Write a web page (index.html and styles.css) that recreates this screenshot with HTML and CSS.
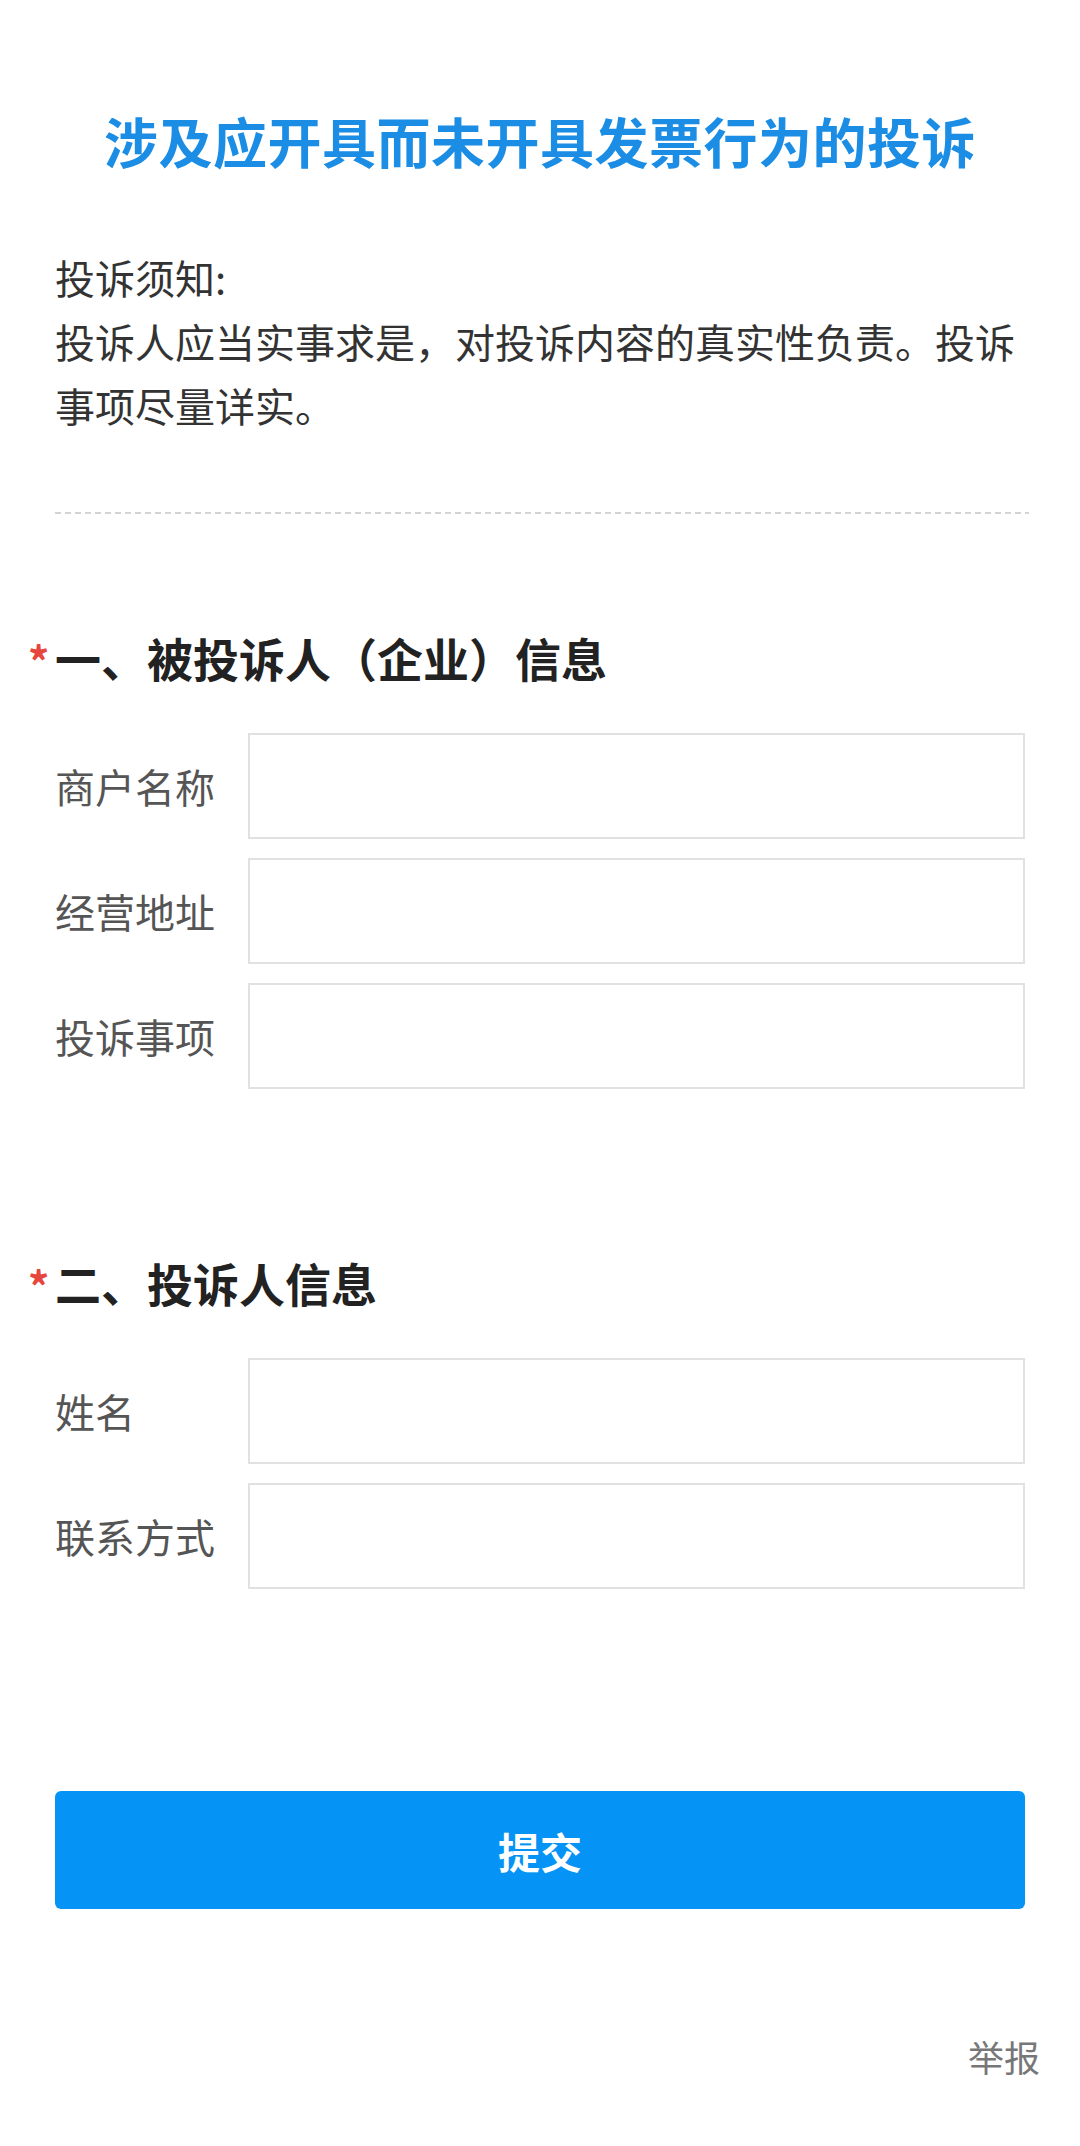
FILE: index.html
```html
<!DOCTYPE html>
<html lang="zh-CN">
<head>
<meta charset="utf-8">
<title>涉及应开具而未开具发票行为的投诉</title>
<link rel="stylesheet" href="styles.css">
</head>
<body>
<div class="page">
  <h1 class="title">涉及应开具而未开具发票行为的投诉</h1>
  <div class="notice">
    <p>投诉须知:</p>
    <p>投诉人应当实事求是，对投诉内容的真实性负责。投诉事项尽量详实。</p>
  </div>
  <div class="divider"></div>

  <h2 class="section-title sec1"><span class="req">*</span>一、被投诉人（企业）信息</h2>
  <div class="fields">
    <div class="row"><span class="label">商户名称</span><input class="input" type="text"></div>
    <div class="row"><span class="label">经营地址</span><input class="input" type="text"></div>
    <div class="row"><span class="label">投诉事项</span><input class="input" type="text"></div>
  </div>

  <h2 class="section-title sec2"><span class="req">*</span>二、投诉人信息</h2>
  <div class="fields">
    <div class="row"><span class="label">姓名</span><input class="input" type="text"></div>
    <div class="row"><span class="label">联系方式</span><input class="input" type="text"></div>
  </div>

  <button class="submit" type="button">提交</button>
  <div class="report-row"><span class="report">举报</span></div>
</div>
</body>
</html>
```

FILE: styles.css
```css
* { box-sizing: border-box; }
html, body {
  margin: 0;
  padding: 0;
  background: #ffffff;
}
body {
  font-family: "Noto Sans CJK SC", "Noto Sans", sans-serif;
  color: #333333;
}
.page {
  width: 1080px;
  height: 2146px;
  padding: 101px 55px 0 55px;
  display: flex;
  flex-direction: column;
}
.title {
  margin: 0;
  height: 80px;
  line-height: 80px;
  font-size: 54px;
  font-weight: 700;
  color: #1b8de4;
  text-align: center;
  letter-spacing: 0.5px;
}
.notice {
  margin-top: 64px;
  font-size: 40px;
  line-height: 64px;
  color: #333333;
}
.notice p { margin: 0; }
.divider {
  margin-top: 75px;
  height: 2px;
  background: repeating-linear-gradient(to right, #d4d4d4 0 6px, transparent 6px 10px);
  background-size: 970px 2px;
  margin-right: -4px;
}
.section-title {
  margin: 0;
  height: 60px;
  line-height: 60px;
  font-size: 46px;
  font-weight: 700;
  color: #222222;
  white-space: nowrap;
}
.sec1 { margin-top: 113px; }
.sec2 { margin-top: 163px; }
.req {
  display: inline-block;
  width: 27px;
  height: 60px;
  margin-left: -27px;
  color: #e5463e;
  font-size: 42px;
  font-weight: 700;
  vertical-align: top;
  line-height: 66px;
  text-align: left;
}
.fields {
  margin-top: 46px;
  display: flex;
  flex-direction: column;
  gap: 19px;
}
.row {
  display: flex;
  align-items: center;
  height: 106px;
}
.label {
  width: 193px;
  flex: none;
  font-size: 40px;
  color: #555555;
  white-space: nowrap;
}
.input {
  flex: 1;
  height: 106px;
  border: 2px solid #e1e1e1;
  background: #ffffff;
  margin: 0;
  padding: 0 16px;
  font-size: 40px;
  outline: none;
  border-radius: 0;
}
.submit {
  margin-top: 202px;
  height: 118px;
  width: 100%;
  border: none;
  border-radius: 6px;
  background: #0693f6;
  color: #ffffff;
  font-family: "Noto Sans CJK SC", "Noto Sans", sans-serif;
  font-size: 42px;
  font-weight: 700;
  padding: 0;
}
.report-row {
  margin-top: 122px;
  margin-right: -15px;
  display: flex;
  justify-content: flex-end;
}
.report {
  font-size: 36px;
  line-height: 50px;
  color: #777777;
}
```
